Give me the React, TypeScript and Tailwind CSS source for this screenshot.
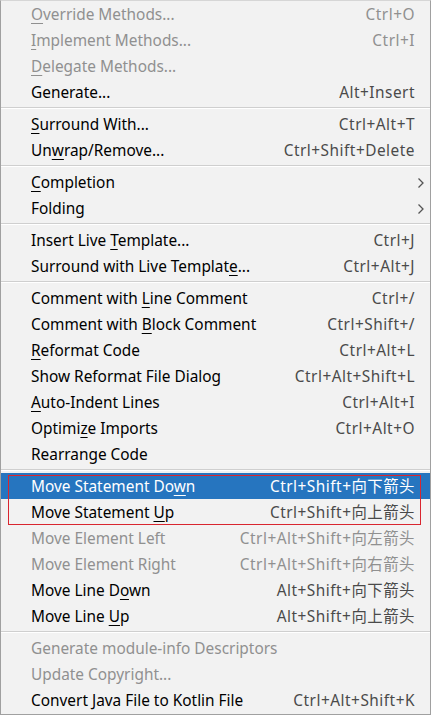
/* IntelliJ "Code" context menu (Windows look), with the two
 * "Move Statement" rows boxed in red.
 */

type Entry = {
  label: string;
  u?: number; // index of the mnemonic letter
  keys?: string;
  off?: boolean; // disabled
  sub?: boolean; // has submenu arrow
  active?: boolean;
};

const groups: Entry[][] = [
  [
    { label: "Override Methods...", u: 0, keys: "Ctrl+O", off: true },
    { label: "Implement Methods...", u: 0, keys: "Ctrl+I", off: true },
    { label: "Delegate Methods...", u: 0, off: true },
    { label: "Generate...", keys: "Alt+Insert" },
  ],
  [
    { label: "Surround With...", u: 0, keys: "Ctrl+Alt+T" },
    { label: "Unwrap/Remove...", u: 2, keys: "Ctrl+Shift+Delete" },
  ],
  [
    { label: "Completion", u: 0, sub: true },
    { label: "Folding", sub: true },
  ],
  [
    { label: "Insert Live Template...", u: 12, keys: "Ctrl+J" },
    { label: "Surround with Live Template...", u: 26, keys: "Ctrl+Alt+J" },
  ],
  [
    { label: "Comment with Line Comment", u: 13, keys: "Ctrl+/" },
    { label: "Comment with Block Comment", u: 13, keys: "Ctrl+Shift+/" },
    { label: "Reformat Code", u: 0, keys: "Ctrl+Alt+L" },
    { label: "Show Reformat File Dialog", keys: "Ctrl+Alt+Shift+L" },
    { label: "Auto-Indent Lines", u: 0, keys: "Ctrl+Alt+I" },
    { label: "Optimize Imports", u: 6, keys: "Ctrl+Alt+O" },
    { label: "Rearrange Code" },
  ],
  [
    { label: "Move Statement Down", u: 17, keys: "Ctrl+Shift+向下箭头", active: true },
    { label: "Move Statement Up", u: 15, keys: "Ctrl+Shift+向上箭头" },
    { label: "Move Element Left", keys: "Ctrl+Alt+Shift+向左箭头", off: true },
    { label: "Move Element Right", keys: "Ctrl+Alt+Shift+向右箭头", off: true },
    { label: "Move Line Down", u: 11, keys: "Alt+Shift+向下箭头" },
    { label: "Move Line Up", u: 10, keys: "Alt+Shift+向上箭头" },
  ],
  [
    { label: "Generate module-info Descriptors", off: true },
    { label: "Update Copyright...", off: true },
    { label: "Convert Java File to Kotlin File", keys: "Ctrl+Alt+Shift+K" },
  ],
];

function Label({ text, u }: { text: string; u?: number }) {
  if (u === undefined) return <span>{text}</span>;
  return (
    <span>
      {text.slice(0, u)}
      <span className="underline underline-offset-[3px]">{text[u]}</span>
      {text.slice(u + 1)}
    </span>
  );
}

function Row({ item }: { item: Entry }) {
  const color = item.active
    ? "bg-[#2675bf] text-white"
    : item.off
    ? "text-[#909090]"
    : "text-black";
  const keyColor = item.active ? "text-white" : item.off ? "text-[#909090]" : "text-[#4a4a4a]";
  return (
    <div className={`flex items-center h-[26px] pt-[2px] pl-[30px] pr-[15px] ${color}`}>
      <Label text={item.label} u={item.u} />
      <span className={`ml-auto tracking-[0.5px] ${keyColor}`}>{item.keys}</span>
      {item.sub && (
        <svg width="8" height="12" viewBox="0 0 8 12" className="-mr-[10px] ml-auto text-[#555]">
          <path d="M1.5 1.5 L6 6 L1.5 10.5" fill="none" stroke="currentColor" strokeWidth="1.3" />
        </svg>
      )}
    </div>
  );
}

export default function App() {
  return (
    <div
      className="w-[431px] h-[715px] bg-[#f2f2f2] border border-[#a0a0a0] border-t-[#d6d6d6] overflow-hidden text-[15.4px] leading-none"
      style={{ fontFamily: '"Noto Sans", "Noto Sans CJK SC", sans-serif' }}
    >
      {groups.map((g, gi) => (
        <div key={gi}>
          {gi > 0 && (
            <div className="h-[6px] flex flex-col justify-center">
              <div className="h-px bg-[#cfcfcf]" />
              <div className="h-px bg-white" />
            </div>
          )}
          {gi === 5 ? (
            <div className="relative">
              <Row item={g[0]} />
              <Row item={g[1]} />
              {/* red highlight box over the two statement rows */}
              <div className="absolute left-[7px] top-[2px] w-[413px] h-[50px] border border-[#d9262f]" />
              {g.slice(2).map((it) => (
                <Row key={it.label} item={it} />
              ))}
            </div>
          ) : (
            g.map((it) => <Row key={it.label} item={it} />)
          )}
        </div>
      ))}
    </div>
  );
}
